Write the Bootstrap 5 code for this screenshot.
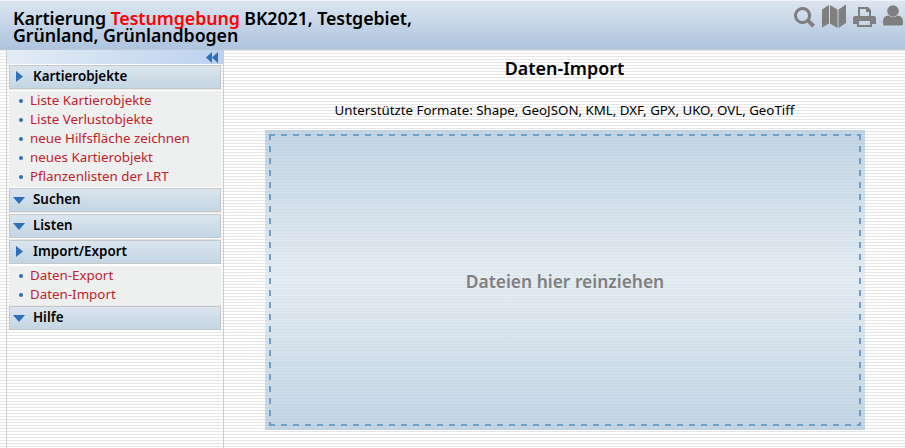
<!DOCTYPE html>
<html lang="de"><head><meta charset="utf-8"><title>Daten-Import</title>
<link href="https://cdn.jsdelivr.net/npm/bootstrap@5.3.0/dist/css/bootstrap.min.css" rel="stylesheet">
<style>
html,body{height:100%}
body{font-family:"Noto Sans","Open Sans",sans-serif;font-size:14px;color:#000;overflow:hidden;
background:repeating-linear-gradient(180deg,#fff 0 2px,#e6e6e6 2px 3px)}
.kopf{height:50px;background:linear-gradient(180deg,#dbe5ef,#aec3de);border-top:1px solid #eef2f6;border-bottom:1px solid #bcc8d6;padding:9px 2px 0 13px}
.kopf h1{font-size:17.8px;line-height:17px;font-weight:600;letter-spacing:-.08px;margin:0;width:440px}
.rot{color:#f00}
.werkzeug{margin-top:-6px;gap:7px}
.werkzeug svg{fill:#7f7f7f;display:block}
.haupt{height:398px}
.seite{width:218px;margin-left:6px;border-left:1px solid #ccc;border-right:1px solid #ccc;flex:none}
.klapp{height:14px;background:linear-gradient(90deg,#e4ecf6,#bcd2ee);margin-bottom:1px;padding-right:5px}
.gruppe{height:24px;margin:1px 2px 2px 2px;border:1px solid #c4c8cb;background:linear-gradient(180deg,#dbe5ee,#c4d5e3);font-weight:600;font-size:13.4px;line-height:20px;padding-left:23px;position:relative}
.pfeil{position:absolute;left:3px;top:8px}
.pfeil-rechts{left:6px;top:5px}
.liste{background:#eef0ef;margin:0 2px;padding:0 0 1px;list-style:none}
.liste li{height:19px;line-height:19px;padding-left:21px;position:relative;color:#c2202c;font-size:13.35px}
.liste li::before{content:"";position:absolute;left:10px;top:8px;width:4px;height:4px;border-radius:50%;background:#2f6fb8}
.inhalt{min-width:0}
.inhalt h2{font-size:17.9px;font-weight:600;text-align:center;margin:8px 0 0;line-height:20px}
.formate{text-align:center;font-size:13.3px;line-height:20px;margin:22px 0 0}
.zone{margin:10px 40px 0 41px;width:600px;height:300px;padding:4px;
background:linear-gradient(180deg,rgba(175,200,221,.75),rgba(222,232,240,.8) 50%,rgba(175,200,221,.75))}
.zone-innen{height:100%;color:#7f7f7f;font-size:17.4px;font-weight:600;padding-top:2px;
background:
repeating-linear-gradient(90deg,#6f9fc8 0 6px,transparent 6px 12px) left top/100% 2px no-repeat,
repeating-linear-gradient(90deg,#6f9fc8 0 6px,transparent 6px 12px) left bottom/100% 2px no-repeat,
repeating-linear-gradient(180deg,#6f9fc8 0 6px,transparent 6px 12px) left top/2px 100% no-repeat,
repeating-linear-gradient(180deg,#6f9fc8 0 6px,transparent 6px 12px) right top/2px 100% no-repeat}
</style></head><body>
<header class="kopf d-flex justify-content-between">
<h1>Kartierung <span class="rot">Testumgebung</span> BK2021, Testgebiet, Grünland, Grünlandbogen</h1>
<div class="werkzeug d-flex">
<svg width="22" height="24" viewBox="0 0 22 24"><path fill-rule="evenodd" d="M9.500 3a8.500 8.500 0 1 0 4.700 15.600l5 5 2.800-2.900-5-5A8.500 8.500 0 0 0 9.500 3zm0 3a5.500 5.500 0 1 1 0 11 5.500 5.500 0 0 1 0-11z"/></svg>
<svg width="24" height="24" viewBox="0 0 24 24"><path d="M0 5.500l7-4.500v18.500l-7 4zM8 1l7.500 4.500v18.500l-7.500-4.500zM16.500 5.500l7.500-5v18.500l-7.500 5z"/></svg>
<svg width="23" height="24" viewBox="0 0 23 24"><path fill-rule="evenodd" d="M5 3h10l3 3v6h3a2 2 0 0 1 2 2v6h-4v3H4v-3H0v-6a2 2 0 0 1 2-2h3zm2 2v7h9V8h-3V5zM6 17v4h11v-4z"/></svg>
<svg width="20" height="24" viewBox="0 0 20 24"><circle cx="10" cy="7" r="5.800"/><path d="M0 20v-3a6 6 0 0 1 5.500-5.500 7 7 0 0 0 9 0A6 6 0 0 1 20 17v3a1.500 1.500 0 0 1-1.500 1.500h-17A1.500 1.500 0 0 1 0 20z"/></svg>
</div></header>
<div class="haupt d-flex">
<nav class="seite">
<div class="klapp d-flex justify-content-end align-items-center"><svg width="12" height="11" viewBox="0 0 12 11" fill="#2f6fb8"><path d="M6 0v11L0 5.500zM12 0v11L6 5.500z"/></svg></div>
<div class="gruppe"><svg class="pfeil pfeil-rechts" width="7" height="11" viewBox="0 0 7 11" fill="#2f6fb8"><path d="M0 0l7 5.500L0 11z"/></svg>Kartierobjekte</div>
<ul class="liste"><li>Liste Kartierobjekte</li><li>Liste Verlustobjekte</li><li>neue Hilfsfläche zeichnen</li><li>neues Kartierobjekt</li><li>Pflanzenlisten der LRT</li></ul>
<div class="gruppe"><svg class="pfeil" width="12" height="7" viewBox="0 0 12 7" fill="#2f6fb8"><path d="M0 0h12L6 7z"/></svg>Suchen</div>
<div class="gruppe"><svg class="pfeil" width="12" height="7" viewBox="0 0 12 7" fill="#2f6fb8"><path d="M0 0h12L6 7z"/></svg>Listen</div>
<div class="gruppe"><svg class="pfeil pfeil-rechts" width="7" height="11" viewBox="0 0 7 11" fill="#2f6fb8"><path d="M0 0l7 5.500L0 11z"/></svg>Import/Export</div>
<ul class="liste"><li>Daten-Export</li><li>Daten-Import</li></ul>
<div class="gruppe"><svg class="pfeil" width="12" height="7" viewBox="0 0 12 7" fill="#2f6fb8"><path d="M0 0h12L6 7z"/></svg>Hilfe</div>
</nav>
<main class="inhalt flex-grow-1">
<h2>Daten-Import</h2>
<p class="formate">Unterstützte Formate: Shape, GeoJSON, KML, DXF, GPX, UKO, OVL, GeoTiff</p>
<div class="zone"><div class="zone-innen d-flex align-items-center justify-content-center">Dateien hier reinziehen</div></div>
</main>
</div>
</body></html>
